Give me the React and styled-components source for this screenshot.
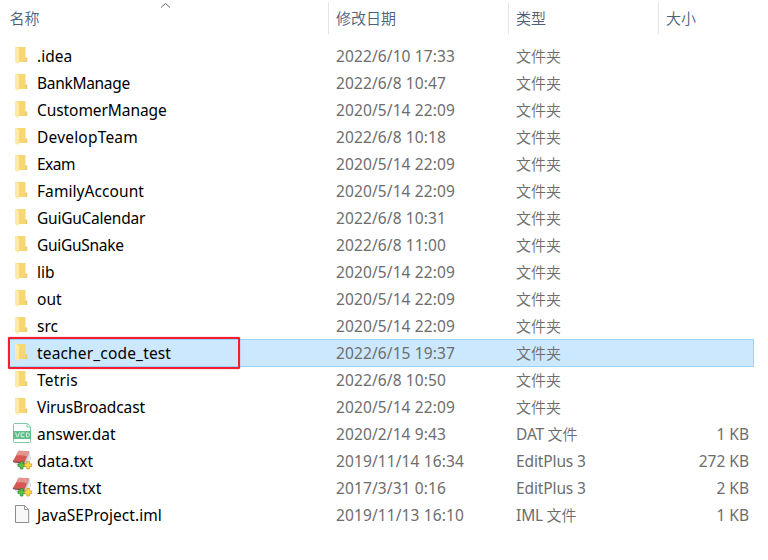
import React from "react";
import styled, { createGlobalStyle } from "styled-components";

const GlobalStyle = createGlobalStyle`
  body { margin: 0; background: #fff; }
  * { box-sizing: border-box; }
`;

const Explorer = styled.main`
  width: 768px;
  height: 560px;
  overflow: hidden;
  background: #fff;
  font-family: "Noto Sans", "Noto Sans CJK SC", sans-serif;
  font-size: 15.5px;
  color: #6d6d6d;
`;

const Header = styled.header`
  position: relative;
  display: grid;
  grid-template-columns: 328px 180px 150px 110px;
  height: 34px;
  margin-bottom: 8px;
`;

const HeaderCell = styled.div`
  height: 32px;
  margin-top: 2px;
  padding-left: ${(p) => (p.$first ? 9.5 : 7)}px;
  border-left: ${(p) => (p.$first ? "0" : "1px solid #e5e5e5")};
  font-family: "Noto Sans CJK SC", sans-serif;
  font-size: 15px;
  font-weight: 350;
  line-height: 31px;
  color: #4c607a;
`;

const SortMark = styled.svg`
  position: absolute;
  left: 160px;
  top: 2px;
`;

const FileList = styled.div`
  display: flex;
  flex-direction: column;
  padding-left: 9px;
`;

const Row = styled.div`
  position: relative;
  display: grid;
  grid-template-columns: 27px 299px 180px 150px 83px;
  width: 745px;
  height: 27px;
  line-height: 27px;
  white-space: pre;
  border: 1px solid transparent;
  ${(p) => p.$selected && "height: 28px; margin-bottom: -1px; background: #cce8ff; border-color: #99d1ff;"}
`;

const Text = styled.span`
  height: 27px;
  line-height: 27px;
  letter-spacing: ${(p) => p.$spacing || 0}px;
`;

const Name = styled(Text)`
  color: #000;
`;

const Kind = styled(Text)`
  font-family: ${(p) => (p.$cjk ? '"Noto Sans CJK SC"' : '"Noto Sans", "Noto Sans CJK SC"')}, sans-serif;
  font-size: ${(p) => (p.$cjk ? 15 : 15.5)}px;
  font-weight: ${(p) => (p.$cjk ? 350 : 400)};
  line-height: ${(p) => (p.$cjk ? 25 : 27)}px;
`;

const Han = styled.span`
  font-family: "Noto Sans CJK SC", sans-serif;
  font-size: 15px;
  font-weight: 350;
  letter-spacing: 0;
  line-height: 1;
`;

const Size = styled(Text)`
  text-align: right;
`;

const IconBox = styled.span`
  display: block;
  height: 25px;
  svg { display: block; }
`;

const Highlight = styled.div`
  position: absolute;
  left: -2px;
  top: -3px;
  width: 232px;
  height: 32px;
  border: 2px solid #f81d2e;
  border-radius: 1px;
  box-shadow: 0 0 1px #f81d2e;
`;

function FolderIcon() {
  return (
    <svg width="27" height="25" viewBox="0 0 27 25">
      <path d="M6 4h9.5v10.7H17V19H8z" fill="#f7d774" />
      <path d="M15.5 14.5h1.7V19h-1.7z" fill="#edc968" />
      <path d="M5 4h1.5L9 5.8v13.7L7.8 21 5 18.7z" fill="#ffe9a6" />
    </svg>
  );
}

function VcdIcon() {
  return (
    <svg width="27" height="25" viewBox="0 0 27 25">
      <path d="M3.5 10V3.5q0-1 1-1h12.8l3.2 3.2V10M3.5 18v2.5q0 1 1 1h15q1 0 1-1V18" fill="#fff" stroke="#7ccaa3" />
      <path d="M17 2.5v3.5h3.5" fill="none" stroke="#7ccaa3" />
      <rect x="3" y="10" width="18" height="8" fill="#5fc08b" />
      <path d="M5.5 11.5l1.7 4.5h.6l1.7-4.5M14.5 12h-3.3v3.7h3.3M16.5 12v3.7h1.8l1-1v-1.7l-1-1z" fill="none" stroke="#d8f0e4" />
    </svg>
  );
}

function EditIcon() {
  return (
    <svg width="27" height="25" viewBox="0 0 27 25">
      <path d="M3 13.5l5 4.5h8l5-7-1.7-7.5z" fill="#c3c7ca" />
      <path d="M4.5 14.5l11 2 4-10.5 1 6-4.5 5.5H8z" fill="#e8eaeb" />
      <path d="M8.7 2.8L19 3.2l-4.7 11.9L2.8 13.3z" fill="#d65755" />
      <path d="M8.7 2.8L19 3.2l-2 5Q12 6.5 6.2 7.6z" fill="#e59590" />
      <path d="M2.8 13l11.6 1.8-.4 1L3.3 14.2z" fill="#8c3b3e" />
      <path d="M10.3 13.5h2.6v2.4h2.3v2.7h-2.3V21h-2.6v-2.4H8v-2.7h2.3z" fill="#5ac548" stroke="#2b8231" strokeWidth=".7" />
      <path d="M16.8 13.5h2.6v2.4h2.3v2.7h-2.3V21h-2.6v-2.4h-2.3v-2.7h2.3z" fill="#ffdc42" stroke="#c4941d" strokeWidth=".7" />
    </svg>
  );
}

function FileIcon() {
  return (
    <svg width="27" height="25" viewBox="0 0 27 25">
      <path d="M5.5 3.5h9.2l4 4v13h-13.2z" fill="#f8f8f8" stroke="#8c8c8c" />
      <path d="M14.5 3.8v3.7h4" fill="none" stroke="#999" />
    </svg>
  );
}

const icons = { folder: FolderIcon, vcd: VcdIcon, edit: EditIcon, file: FileIcon };

const files = [
  { name: ".idea", date: "2022/6/10 17:33" },
  { name: "BankManage", date: "2022/6/8 10:47", spacing: -0.3 },
  { name: "CustomerManage", date: "2020/5/14 22:09", spacing: -0.07 },
  { name: "DevelopTeam", date: "2022/6/8 10:18", spacing: 0.2 },
  { name: "Exam", date: "2020/5/14 22:09", spacing: -0.5 },
  { name: "FamilyAccount", date: "2020/5/14 22:09", spacing: 0.07 },
  { name: "GuiGuCalendar", date: "2022/6/8 10:31", spacing: -0.24 },
  { name: "GuiGuSnake", date: "2022/6/8 11:00", spacing: -0.28 },
  { name: "lib", date: "2020/5/14 22:09" },
  { name: "out", date: "2020/5/14 22:09" },
  { name: "src", date: "2020/5/14 22:09" },
  { name: "teacher_code_test", date: "2022/6/15 19:37", selected: true, spacing: 0.16 },
  { name: "Tetris", date: "2022/6/8 10:50", spacing: 0.2 },
  { name: "VirusBroadcast", date: "2020/5/14 22:09", spacing: -0.12 },
  { name: "answer.dat", date: "2020/2/14 9:43", kind: "DAT", icon: "vcd", size: "1 KB" },
  { name: "data.txt", date: "2019/11/14 16:34", kind: "EditPlus 3", icon: "edit", size: "272 KB" },
  { name: "Items.txt", date: "2017/3/31 0:16", kind: "EditPlus 3", icon: "edit", size: "2 KB", spacing: -0.1 },
  { name: "JavaSEProject.iml", date: "2019/11/13 16:10", kind: "IML", icon: "file", size: "1 KB", spacing: 0.06 },
];

function FileRow({ file }) {
  const Icon = icons[file.icon || "folder"];
  const folder = !file.kind;
  return (
    <Row $selected={file.selected}>
      <IconBox><Icon /></IconBox>
      <Name $spacing={file.spacing}>{file.name}</Name>
      <Text $spacing={0.11}>{file.date}</Text>
      <Kind $cjk={folder} $spacing={folder ? 0 : -0.12}>
        {folder ? "文件夹" : file.kind}
        {file.kind && file.kind.length === 3 && <Han> 文件</Han>}
      </Kind>
      <Size>{file.size}</Size>
      {file.selected && <Highlight />}
    </Row>
  );
}

export default function App() {
  return (
    <Explorer>
      <GlobalStyle />
      <Header>
        <HeaderCell $first>名称</HeaderCell>
        <HeaderCell>修改日期</HeaderCell>
        <HeaderCell>类型</HeaderCell>
        <HeaderCell>大小</HeaderCell>
        <SortMark width="11" height="7" viewBox="0 0 11 7">
          <path d="M1 5.5l4.5-4 4.5 4" fill="none" stroke="#666" />
        </SortMark>
      </Header>
      <FileList>
        {files.map((file) => <FileRow key={file.name} file={file} />)}
      </FileList>
    </Explorer>
  );
}
